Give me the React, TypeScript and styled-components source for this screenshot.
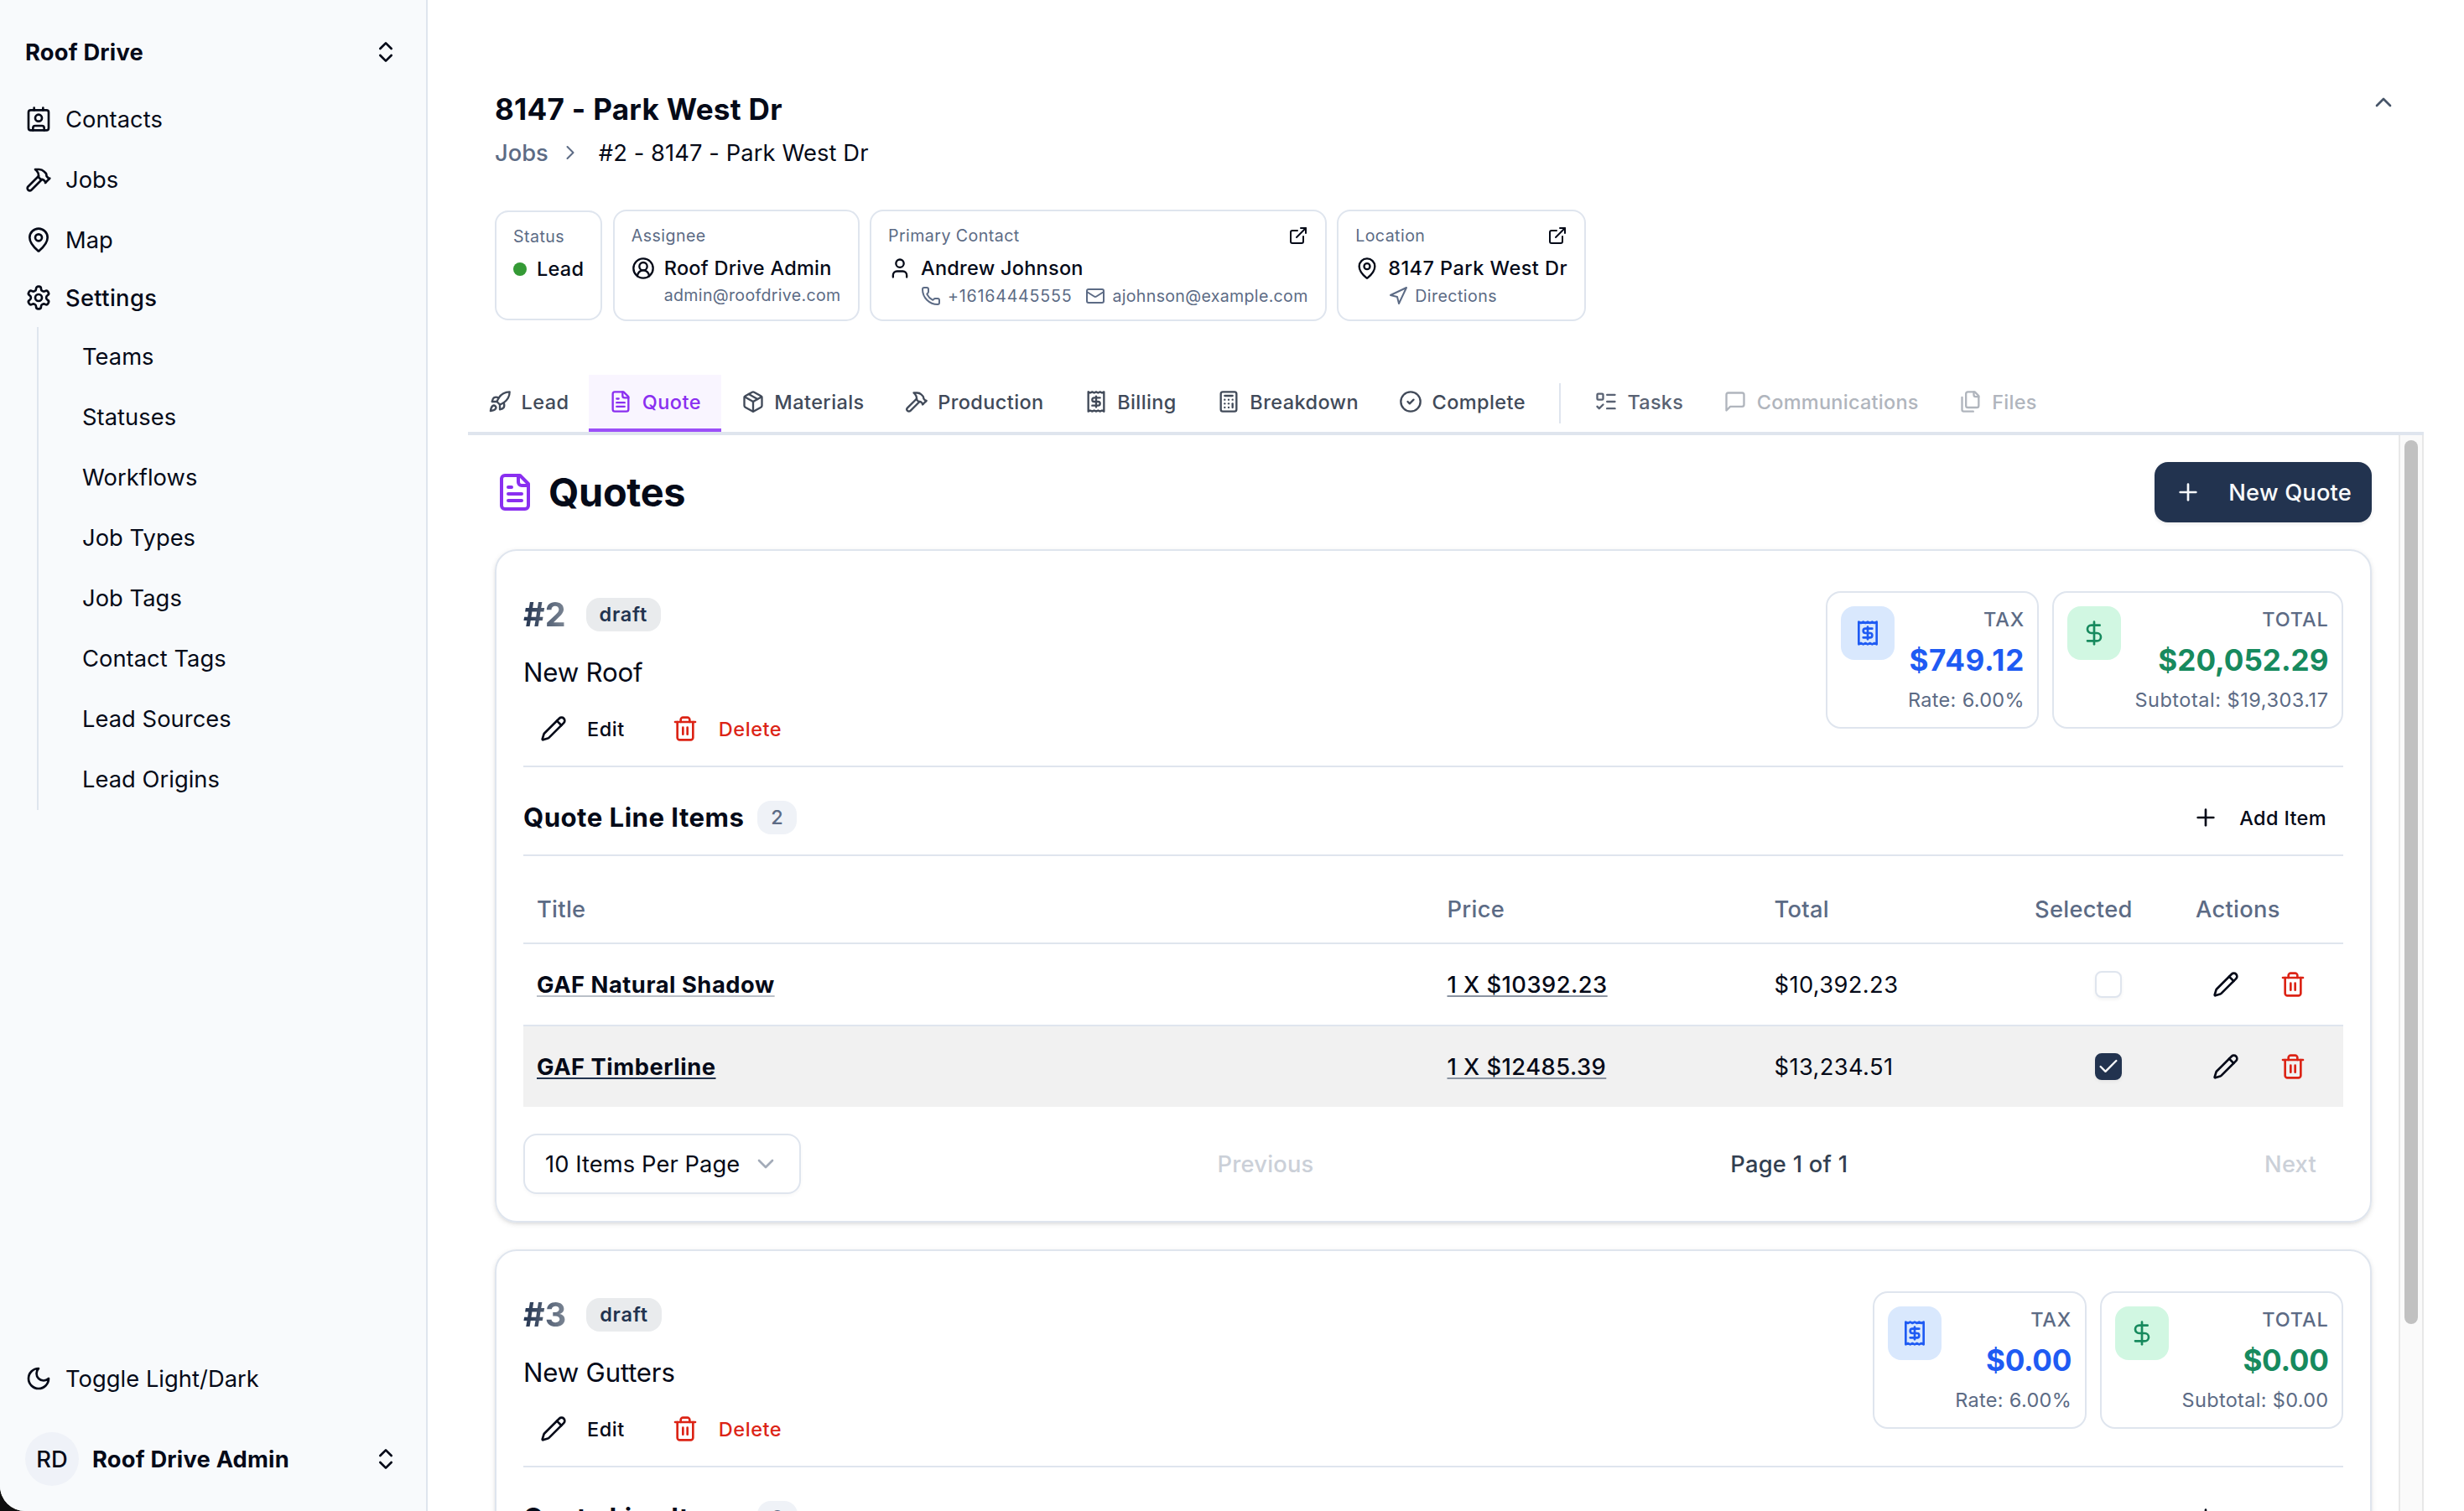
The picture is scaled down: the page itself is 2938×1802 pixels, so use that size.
import React from 'react';
import styled, { createGlobalStyle, css } from 'styled-components';
import {
  Calculator,
  Check,
  ChevronDown,
  ChevronRight,
  ChevronUp,
  ChevronsUpDown,
  CircleCheck,
  CircleUserRound,
  Contact,
  DollarSign,
  ExternalLink,
  Hammer,
  ListTodo,
  Mail,
  MapPin,
  Navigation,
  Package,
  Pencil,
  Phone,
  Plus,
  Rocket,
  User,
} from 'lucide-react';

const color = {
  text: '#050a18',
  muted: '#5c6b85',
  border: '#dfe5ee',
  sidebar: '#f8fafc',
  primary: '#22334f',
  red: '#dc2416',
  purple: '#8a2ff0',
  blue: '#1f5bf3',
  green: '#178a5e',
};

interface IconProps {
  size: number;
}

const Glyph: React.FC<IconProps & { children: React.ReactNode }> = ({ size, children }) => (
  <svg
    width={size}
    height={size}
    viewBox="0 0 24 24"
    fill="none"
    stroke="currentColor"
    strokeWidth={2}
    strokeLinecap="round"
    strokeLinejoin="round"
  >
    {children}
  </svg>
);

const FileTextIcon: React.FC<IconProps> = ({ size }) => (
  <Glyph size={size}>
    <path d="M15 2H6a2 2 0 0 0-2 2v16a2 2 0 0 0 2 2h12a2 2 0 0 0 2-2V7Z" />
    <path d="M14 2v4a2 2 0 0 0 2 2h4" />
    <path d="M10 9H8" />
    <path d="M16 13H8" />
    <path d="M16 17H8" />
  </Glyph>
);

const ReceiptIcon: React.FC<IconProps> = ({ size }) => (
  <Glyph size={size}>
    <path d="M4 2v20l2-1 2 1 2-1 2 1 2-1 2 1 2-1 2 1V2l-2 1-2-1-2 1-2-1-2 1-2-1-2 1Z" />
    <path d="M16 8h-6a2 2 0 1 0 0 4h4a2 2 0 1 1 0 4H8" />
    <path d="M12 17.5v-11" />
  </Glyph>
);

const MessageIcon: React.FC<IconProps> = ({ size }) => (
  <Glyph size={size}>
    <path d="M21 15a2 2 0 0 1-2 2H7l-4 4V5a2 2 0 0 1 2-2h14a2 2 0 0 1 2 2z" />
  </Glyph>
);

const FilesIcon: React.FC<IconProps> = ({ size }) => (
  <Glyph size={size}>
    <path d="M20 7h-3a2 2 0 0 1-2-2V2" />
    <path d="M9 18a2 2 0 0 1-2-2V4a2 2 0 0 1 2-2h7l4 4v10a2 2 0 0 1-2 2Z" />
    <path d="M3 7.6v12.8A1.6 1.6 0 0 0 4.6 22h9.8" />
  </Glyph>
);

const TrashIcon: React.FC<IconProps> = ({ size }) => (
  <Glyph size={size}>
    <path d="M3 6h18" />
    <path d="M19 6v14c0 1-1 2-2 2H7c-1 0-2-1-2-2V6" />
    <path d="M8 6V4c0-1 1-2 2-2h4c1 0 2 1 2 2v2" />
    <path d="M10 11v6" />
    <path d="M14 11v6" />
  </Glyph>
);

const MoonIcon: React.FC<IconProps> = ({ size }) => (
  <Glyph size={size}>
    <path d="M12 3a6 6 0 0 0 9 9 9 9 0 1 1-9-9Z" />
  </Glyph>
);

const GearIcon: React.FC<IconProps> = ({ size }) => (
  <Glyph size={size}>
    <path d="M12.22 2h-.44a2 2 0 0 0-2 2v.18a2 2 0 0 1-1 1.73l-.43.25a2 2 0 0 1-2 0l-.15-.08a2 2 0 0 0-2.73.73l-.22.38a2 2 0 0 0 .73 2.73l.15.1a2 2 0 0 1 1 1.72v.51a2 2 0 0 1-1 1.74l-.15.09a2 2 0 0 0-.73 2.73l.22.38a2 2 0 0 0 2.73.73l.15-.08a2 2 0 0 1 2 0l.43.25a2 2 0 0 1 1 1.73V20a2 2 0 0 0 2 2h.44a2 2 0 0 0 2-2v-.18a2 2 0 0 1 1-1.73l.43-.25a2 2 0 0 1 2 0l.15.08a2 2 0 0 0 2.73-.73l.22-.39a2 2 0 0 0-.73-2.73l-.15-.08a2 2 0 0 1-1-1.74v-.5a2 2 0 0 1 1-1.74l.15-.09a2 2 0 0 0 .73-2.73l-.22-.38a2 2 0 0 0-2.73-.73l-.15.08a2 2 0 0 1-2 0l-.43-.25a2 2 0 0 1-1-1.73V4a2 2 0 0 0-2-2z" />
    <circle cx="12" cy="12" r="3" />
  </Glyph>
);

interface LineItem {
  title: string;
  price: string;
  total: string;
  selected: boolean;
}

interface Quote {
  number: number;
  name: string;
  tax: string;
  total: string;
  subtotal: string;
  items: LineItem[];
}

const quotes: Quote[] = [
  {
    number: 2,
    name: 'New Roof',
    tax: '$749.12',
    total: '$20,052.29',
    subtotal: '$19,303.17',
    items: [
      { title: 'GAF Natural Shadow', price: '1 X $10392.23', total: '$10,392.23', selected: false },
      { title: 'GAF Timberline', price: '1 X $12485.39', total: '$13,234.51', selected: true },
    ],
  },
  { number: 3, name: 'New Gutters', tax: '$0.00', total: '$0.00', subtotal: '$0.00', items: [] },
];

const settingsLinks = [
  'Teams',
  'Statuses',
  'Workflows',
  'Job Types',
  'Job Tags',
  'Contact Tags',
  'Lead Sources',
  'Lead Origins',
];

const stageTabs = [
  { label: 'Lead', icon: <Rocket size={28} /> },
  { label: 'Quote', icon: <FileTextIcon size={28} />, active: true },
  { label: 'Materials', icon: <Package size={28} /> },
  { label: 'Production', icon: <Hammer size={28} /> },
  { label: 'Billing', icon: <ReceiptIcon size={28} /> },
  { label: 'Breakdown', icon: <Calculator size={28} /> },
  { label: 'Complete', icon: <CircleCheck size={28} /> },
];

const Sidebar: React.FC = () => (
  <SidebarPanel>
    <SidebarSwitcher>
      <SidebarTitle>Roof Drive</SidebarTitle>
      <ChevronsUpDown size={32} />
    </SidebarSwitcher>
    <NavItem>
      <Contact size={32} />
      Contacts
    </NavItem>
    <NavItem>
      <Hammer size={32} />
      Jobs
    </NavItem>
    <NavItem>
      <MapPin size={32} />
      Map
    </NavItem>
    <NavItem $open>
      <GearIcon size={32} />
      Settings
    </NavItem>
    <SubNav>
      {settingsLinks.map((label) => (
        <SubNavItem key={label}>{label}</SubNavItem>
      ))}
    </SubNav>
    <SidebarFooter>
      <NavItem>
        <MoonIcon size={32} />
        Toggle Light/Dark
      </NavItem>
      <UserRow>
        <Avatar>RD</Avatar>
        <SidebarTitle>Roof Drive Admin</SidebarTitle>
        <ChevronsUpDown size={32} />
      </UserRow>
    </SidebarFooter>
  </SidebarPanel>
);

const JobHeader: React.FC = () => (
  <HeaderArea>
    <TitleRow>
      <JobTitle>8147 - Park West Dr</JobTitle>
      <ChevronUp size={32} color="#475569" />
    </TitleRow>
    <Breadcrumb>
      <Crumb>Jobs</Crumb>
      <ChevronRight size={28} strokeWidth={1.75} />
      <CurrentCrumb>#2 - 8147 - Park West Dr</CurrentCrumb>
    </Breadcrumb>
    <InfoCards>
      <InfoCard $short>
        <InfoLabel>Status</InfoLabel>
        <InfoName $gap={12}>
          <StatusDot />
          Lead
        </InfoName>
      </InfoCard>
      <InfoCard>
        <InfoLabel>Assignee</InfoLabel>
        <InfoName>
          <CircleUserRound size={28} />
          Roof Drive Admin
        </InfoName>
        <InfoSub>admin@roofdrive.com</InfoSub>
      </InfoCard>
      <InfoCard>
        <InfoLabel>
          Primary Contact
          <ExternalLink size={24} color={color.text} />
        </InfoLabel>
        <InfoName>
          <User size={28} />
          Andrew Johnson
        </InfoName>
        <InfoSub>
          <InfoLink $tracking={0.8}>
            <Phone size={24} />
            +16164445555
          </InfoLink>
          <InfoLink>
            <Mail size={24} />
            ajohnson@example.com
          </InfoLink>
        </InfoSub>
      </InfoCard>
      <InfoCard>
        <InfoLabel>
          Location
          <ExternalLink size={24} color={color.text} />
        </InfoLabel>
        <InfoName $tracking={0.46}>
          <MapPin size={28} />
          8147 Park West Dr
        </InfoName>
        <InfoSub>
          <InfoLink $tracking={0.45}>
            <Navigation size={24} />
            Directions
          </InfoLink>
        </InfoSub>
      </InfoCard>
    </InfoCards>
  </HeaderArea>
);

const QuoteCard: React.FC<{ quote: Quote }> = ({ quote }) => {
  const empty = quote.items.length === 0;
  return (
    <Card>
      <CardTop>
        <div>
          <NumberRow>
            <QuoteNumber>#{quote.number}</QuoteNumber>
            <StateBadge>draft</StateBadge>
          </NumberRow>
          <QuoteName>{quote.name}</QuoteName>
          <ButtonRow>
            <GhostButton>
              <Pencil size={32} />
              Edit
            </GhostButton>
            <GhostButton $danger>
              <TrashIcon size={32} />
              Delete
            </GhostButton>
          </ButtonRow>
        </div>
        <Stats>
          <Stat>
            <StatTile $tone="blue">
              <ReceiptIcon size={32} />
            </StatTile>
            <StatBody>
              <StatLabel>TAX</StatLabel>
              <StatAmount $tone="blue" $tracking={empty ? -0.3 : 0.7}>
                {quote.tax}
              </StatAmount>
              <StatNote $tight>Rate: 6.00%</StatNote>
            </StatBody>
          </Stat>
          <Stat>
            <StatTile $tone="green">
              <DollarSign size={32} />
            </StatTile>
            <StatBody>
              <StatLabel>TOTAL</StatLabel>
              <StatAmount $tone="green" $tracking={empty ? -0.3 : 0}>
                {quote.total}
              </StatAmount>
              <StatNote $tight={empty}>Subtotal: {quote.subtotal}</StatNote>
            </StatBody>
          </Stat>
        </Stats>
      </CardTop>
      <ItemsHeader>
        <ItemsTitle>Quote Line Items</ItemsTitle>
        <CountBadge>{quote.items.length}</CountBadge>
        <AddButton>
          <Plus size={32} />
          Add Item
        </AddButton>
      </ItemsHeader>
      {!empty && <ItemsTable items={quote.items} />}
    </Card>
  );
};

const ItemsTable: React.FC<{ items: LineItem[] }> = ({ items }) => (
  <>
    <TableHead>
      <Cell>Title</Cell>
      <Cell>Price</Cell>
      <Cell>Total</Cell>
      <Cell>Selected</Cell>
      <Cell>Actions</Cell>
    </TableHead>
    {items.map((item) => (
      <TableRow key={item.title} $selected={item.selected}>
        <Cell>
          <ItemTitle $selected={item.selected}>{item.title}</ItemTitle>
        </Cell>
        <Cell>
          <ItemPrice>{item.price}</ItemPrice>
        </Cell>
        <Cell>
          <ItemTotal>{item.total}</ItemTotal>
        </Cell>
        <CheckCell>
          <Checkbox $checked={item.selected}>
            {item.selected && <Check size={28} />}
          </Checkbox>
        </CheckCell>
        <ActionsCell>
          <IconButton>
            <Pencil size={32} />
          </IconButton>
          <IconButton $danger>
            <TrashIcon size={32} />
          </IconButton>
        </ActionsCell>
      </TableRow>
    ))}
    <Pagination>
      <PageSize>
        10 Items Per Page
        <ChevronDown size={32} color="#a3abb8" />
      </PageSize>
      <PageButton>Previous</PageButton>
      <PageInfo>Page 1 of 1</PageInfo>
      <PageButton>Next</PageButton>
    </Pagination>
  </>
);

const App: React.FC = () => (
  <>
    <GlobalStyle />
    <Window>
      <Sidebar />
      <Main>
        <JobHeader />
        <TabBar>
          {stageTabs.map((tab) => (
            <Tab key={tab.label} $active={tab.active}>
              {tab.icon}
              {tab.label}
            </Tab>
          ))}
          <TabDivider />
          <Tab $soft>
            <ListTodo size={28} />
            Tasks
          </Tab>
          <Tab $disabled>
            <MessageIcon size={28} />
            Communications
          </Tab>
          <Tab $disabled>
            <FilesIcon size={28} />
            Files
          </Tab>
        </TabBar>
        <ScrollArea>
          <Content>
            <PageHeading>
              <FileTextIcon size={48} />
              <Heading>Quotes</Heading>
              <NewButton>
                <Plus size={32} />
                New Quote
              </NewButton>
            </PageHeading>
            {quotes.map((quote) => (
              <QuoteCard key={quote.number} quote={quote} />
            ))}
          </Content>
          <ScrollTrack>
            <ScrollThumb />
          </ScrollTrack>
        </ScrollArea>
      </Main>
    </Window>
  </>
);

const GlobalStyle = createGlobalStyle`
  * {
    box-sizing: border-box;
  }

  body {
    margin: 0;
    background: #0f0f0f;
    color: ${color.text};
    font-family: Inter, 'Liberation Sans', sans-serif;
    font-size: 27.3px;
  }

  svg {
    flex: none;
  }
`;

const Window = styled.div`
  display: flex;
  width: 2938px;
  height: 1802px;
  background: #fff;
  border-bottom-left-radius: 30px;
  overflow: hidden;
`;

const SidebarPanel = styled.aside`
  display: flex;
  flex-direction: column;
  flex: none;
  width: 510px;
  padding: 30px 32px 26px 30px;
  background: ${color.sidebar};
  border-right: 2px solid ${color.border};
`;

const SidebarSwitcher = styled.div`
  display: flex;
  align-items: center;
  height: 64px;
  margin-bottom: 12px;
`;

const SidebarTitle = styled.span`
  flex: 1;
  font-weight: 650;
  letter-spacing: 0.2px;
`;

const NavItem = styled.div<{ $open?: boolean }>`
  display: flex;
  align-items: center;
  gap: 16px;
  height: 72px;
  letter-spacing: 0.05px;
  ${(props) =>
    props.$open &&
    css`
      height: 66px;
      font-weight: 550;
      letter-spacing: 0.35px;
    `}
`;

const SubNav = styled.div`
  margin: 2px 0 0 14px;
  padding-left: 52px;
  border-left: 2px solid ${color.border};
`;

const SubNavItem = styled.div`
  height: 72px;
  line-height: 72px;
  letter-spacing: 0.05px;
`;

const SidebarFooter = styled.div`
  margin-top: auto;
`;

const UserRow = styled.div`
  display: flex;
  align-items: center;
  gap: 16px;
  height: 72px;
  margin-top: 24px;
`;

const Avatar = styled.div`
  display: flex;
  align-items: center;
  justify-content: center;
  width: 64px;
  height: 64px;
  border-radius: 50%;
  background: #eff2f8;
  font-weight: 450;
`;

const Main = styled.main`
  display: flex;
  flex-direction: column;
  flex: 1;
  min-width: 0;
`;

const HeaderArea = styled.header`
  padding: 104px 80px 0;
`;

const TitleRow = styled.div`
  display: flex;
  justify-content: space-between;
  height: 52px;
  svg {
    margin-top: 2px;
  }
`;

const JobTitle = styled.h1`
  margin: 0;
  font-size: 35.1px;
  font-weight: 700;
  line-height: 52px;
  letter-spacing: 0.29px;
`;

const Breadcrumb = styled.div`
  display: flex;
  align-items: center;
  gap: 12px;
  height: 32px;
  margin-top: 10px;
  color: ${color.muted};
`;

const Crumb = styled.span`
  font-weight: 500;
`;

const CurrentCrumb = styled.span`
  margin-left: 8px;
  color: ${color.text};
  letter-spacing: 0.1px;
`;

const InfoCards = styled.div`
  display: flex;
  align-items: center;
  gap: 12.5px;
  margin-top: 52px;
`;

const InfoCard = styled.div<{ $short?: boolean }>`
  height: ${(props) => (props.$short ? 131 : 133)}px;
  padding: 14px 20px 0;
  border: 2px solid ${color.border};
  border-radius: 16px;
`;

const InfoLabel = styled.div`
  display: flex;
  align-items: center;
  justify-content: space-between;
  height: 30px;
  color: ${color.muted};
  font-size: 19.6px;
  letter-spacing: 0.44px;
`;

const InfoName = styled.div<{ $gap?: number; $tracking?: number }>`
  display: flex;
  align-items: center;
  gap: ${(props) => props.$gap ?? 11}px;
  height: 47px;
  font-size: 23.5px;
  font-weight: 500;
  letter-spacing: ${(props) => props.$tracking ?? 0.26}px;
`;

const InfoSub = styled.div`
  display: flex;
  gap: 16px;
  height: 20px;
  padding-left: 39px;
  color: ${color.muted};
  font-size: 19.6px;
  line-height: 19px;
  letter-spacing: 0.31px;
`;

const InfoLink = styled.span<{ $tracking?: number }>`
  display: flex;
  align-items: center;
  gap: 8px;
  letter-spacing: ${(props) => props.$tracking ?? 0.31}px;
`;

const StatusDot = styled.span`
  width: 16px;
  height: 16px;
  border-radius: 50%;
  background: #349a35;
`;

const TabBar = styled.nav`
  display: flex;
  height: 72px;
  margin: 64px 48px 0;
  border-bottom: 4px solid ${color.border};
`;

const Tab = styled.div<{ $active?: boolean; $soft?: boolean; $disabled?: boolean }>`
  display: flex;
  align-items: center;
  gap: 11.5px;
  height: 68px;
  padding: 0 24px;
  border-bottom: 4px solid transparent;
  color: #414a59;
  font-size: 23.5px;
  font-weight: 500;
  letter-spacing: ${(props) => (props.$soft || props.$disabled ? 0.26 : 0.41)}px;
  ${(props) =>
    props.$active &&
    css`
      background: #f9f5ff;
      border-color: #9b4ff8;
      color: ${color.purple};
    `}
  ${(props) => props.$soft && 'color: #596273;'}
  ${(props) => props.$disabled && 'color: #b0b5bd;'}
`;

const TabDivider = styled.div`
  width: 2px;
  height: 48px;
  margin: 10px 16px 0;
  background: ${color.border};
`;

const ScrollArea = styled.div`
  display: flex;
  flex: 1;
  min-height: 0;
  margin: 0 48px;
  overflow: hidden;
`;

const Content = styled.div`
  flex: 1;
  padding: 32px;
`;

const ScrollTrack = styled.div`
  width: 30px;
  padding: 6px 5px;
  background: #fafafa;
  border: solid #e8e8e8;
  border-width: 0 2px;
`;

const ScrollThumb = styled.div`
  width: 16px;
  height: 1054px;
  border-radius: 8px;
  background: #c1c1c1;
`;

const PageHeading = styled.div`
  display: flex;
  align-items: center;
  gap: 16px;
  height: 72px;
  color: ${color.purple};
`;

const Heading = styled.h2`
  margin: 0;
  color: ${color.text};
  font-size: 46.8px;
  font-weight: 700;
  letter-spacing: -0.3px;
`;

const NewButton = styled.div`
  display: flex;
  align-items: center;
  gap: 32px;
  height: 72px;
  margin-left: auto;
  padding: 0 24px;
  border-radius: 16px;
  background: ${color.primary};
  box-shadow: 0 2px 4px rgba(0, 0, 0, 0.08);
  color: #f8fafc;
  font-weight: 500;
  letter-spacing: 0.18px;
`;

const Card = styled.section`
  margin-top: 32px;
  padding: 48px 32px 32px;
  border: 2px solid ${color.border};
  border-radius: 26px;
  box-shadow: 0 2px 6px rgba(0, 0, 0, 0.1), 0 2px 4px -2px rgba(0, 0, 0, 0.1);
`;

const CardTop = styled.div`
  display: flex;
  justify-content: space-between;
  height: 210px;
  border-bottom: 2px solid ${color.border};
`;

const NumberRow = styled.div`
  display: flex;
  align-items: center;
  gap: 24px;
  height: 56px;
`;

const QuoteNumber = styled.span`
  background: linear-gradient(to right, ${color.primary}, #7d8795);
  -webkit-background-clip: text;
  background-clip: text;
  color: transparent;
  font-size: 39.5px;
  font-weight: 700;
`;

const StateBadge = styled.span`
  height: 40px;
  padding: 0 16px;
  border-radius: 16px;
  background: #e9ebed;
  color: ${color.primary};
  font-size: 23.5px;
  font-weight: 600;
  line-height: 40px;
  letter-spacing: 0.75px;
`;

const QuoteName = styled.div`
  height: 48px;
  margin: 17px 0 11px;
  font-size: 31.2px;
  line-height: 48px;
  letter-spacing: -0.2px;
`;

const ButtonRow = styled.div`
  display: flex;
  gap: 16px;
`;

const GhostButton = styled.div<{ $danger?: boolean }>`
  display: flex;
  align-items: center;
  gap: 24px;
  height: 64px;
  padding: 0 20px;
  color: ${(props) => (props.$danger ? color.red : color.text)};
  font-size: 23.5px;
  font-weight: 500;
  letter-spacing: 0.55px;
`;

const Stats = styled.div`
  display: flex;
  align-items: flex-start;
  gap: 16px;
`;

const Stat = styled.div`
  display: flex;
  gap: 16px;
  height: 164px;
  padding: 16px;
  border: 2px solid ${color.border};
  border-radius: 18px;
`;

const StatTile = styled.div<{ $tone: 'blue' | 'green' }>`
  display: flex;
  align-items: center;
  justify-content: center;
  width: 64px;
  height: 64px;
  border-radius: 16px;
  background: ${(props) => (props.$tone === 'blue' ? '#d9e8fd' : '#d1f7e2')};
  color: ${(props) => color[props.$tone]};
`;

const StatBody = styled.div`
  margin-right: -0.5px;
  text-align: right;
`;

const StatLabel = styled.div`
  color: ${color.muted};
  font-size: 23.5px;
  font-weight: 500;
  line-height: 32px;
  letter-spacing: 0.8px;
`;

const StatAmount = styled.div<{ $tone: 'blue' | 'green'; $tracking: number }>`
  color: ${(props) => color[props.$tone]};
  font-size: 35.1px;
  font-weight: 700;
  line-height: 64px;
  letter-spacing: ${(props) => props.$tracking}px;
`;

const StatNote = styled.div<{ $tight: boolean }>`
  color: ${color.muted};
  font-size: 23.5px;
  line-height: 32px;
  letter-spacing: ${(props) => (props.$tight ? 0.32 : 0.52)}px;
`;

const ItemsHeader = styled.div`
  display: flex;
  align-items: center;
  gap: 16px;
  height: 106px;
  padding: 28px 0 12px;
  border-bottom: 2px solid ${color.border};
`;

const ItemsTitle = styled.h3`
  margin: 0;
  font-size: 31.2px;
  font-weight: 650;
  letter-spacing: 0.45px;
`;

const CountBadge = styled.span`
  height: 40px;
  padding: 0 16px;
  border-radius: 16px;
  background: #eff2f7;
  color: ${color.muted};
  font-size: 23.5px;
  font-weight: 500;
  line-height: 40px;
`;

const AddButton = styled(GhostButton)`
  margin-left: auto;
  letter-spacing: 0.35px;
`;

const tableColumns = css`
  display: grid;
  grid-template-columns: 1085.5px 390px 310.5px 192px 192px;
  align-items: center;
`;

const TableHead = styled.div`
  ${tableColumns}
  height: 81px;
  margin-top: 24px;
  border-bottom: 2px solid ${color.border};
  color: ${color.muted};
  font-weight: 500;
  letter-spacing: 0.3px;
`;

const TableRow = styled.div<{ $selected: boolean }>`
  ${tableColumns}
  height: 98px;
  border-bottom: 2px solid ${color.border};
  background: ${(props) => (props.$selected ? '#f1f1f1' : 'none')};
  &:nth-last-child(2) {
    height: 96px;
    border-bottom: 0;
  }
`;

const Cell = styled.div`
  padding-left: 16px;
`;

const CheckCell = styled(Cell)`
  display: flex;
  justify-content: center;
`;

const ActionsCell = styled(Cell)`
  display: flex;
  gap: 16px;
  padding-left: 20px;
`;

const underline = css`
  text-decoration: underline;
  text-decoration-thickness: 2px;
  text-decoration-skip-ink: none;
  text-underline-offset: 3px;
`;

const ItemTitle = styled.span<{ $selected: boolean }>`
  ${underline}
  text-decoration-color: ${(props) => (props.$selected ? color.primary : '#bac0c8')};
  font-weight: 650;
  letter-spacing: 0.53px;
`;

const ItemPrice = styled.span`
  ${underline}
  text-decoration-color: #8a93a1;
  font-weight: 500;
  letter-spacing: 0.48px;
`;

const ItemTotal = styled.span`
  letter-spacing: 0.38px;
`;

const Checkbox = styled.div<{ $checked: boolean }>`
  display: flex;
  align-items: center;
  justify-content: center;
  width: 32px;
  height: 32px;
  border: 2px solid ${(props) => (props.$checked ? color.primary : color.border)};
  border-radius: 8px;
  background: ${(props) => (props.$checked ? color.primary : '#fff')};
  box-shadow: 0 2px 4px rgba(0, 0, 0, 0.05);
  color: #f8fafc;
`;

const IconButton = styled.div<{ $danger?: boolean }>`
  display: flex;
  align-items: center;
  justify-content: center;
  width: 64px;
  height: 64px;
  color: ${(props) => (props.$danger ? color.red : color.text)};
`;

const Pagination = styled.div`
  display: flex;
  align-items: center;
  justify-content: space-between;
  margin-top: 32px;
`;

const PageSize = styled.div`
  display: flex;
  align-items: center;
  gap: 14.5px;
  height: 72px;
  padding: 0 24px;
  border: 2px solid ${color.border};
  border-radius: 16px;
  box-shadow: 0 2px 4px rgba(0, 0, 0, 0.03);
  letter-spacing: 0.08px;
`;

const PageButton = styled.div`
  padding: 0 32px;
  color: #cbd0d8;
  font-weight: 500;
  letter-spacing: 0.2px;
`;

const PageInfo = styled.div`
  color: #333f51;
  font-weight: 450;
  letter-spacing: 0.25px;
`;

export default App;
